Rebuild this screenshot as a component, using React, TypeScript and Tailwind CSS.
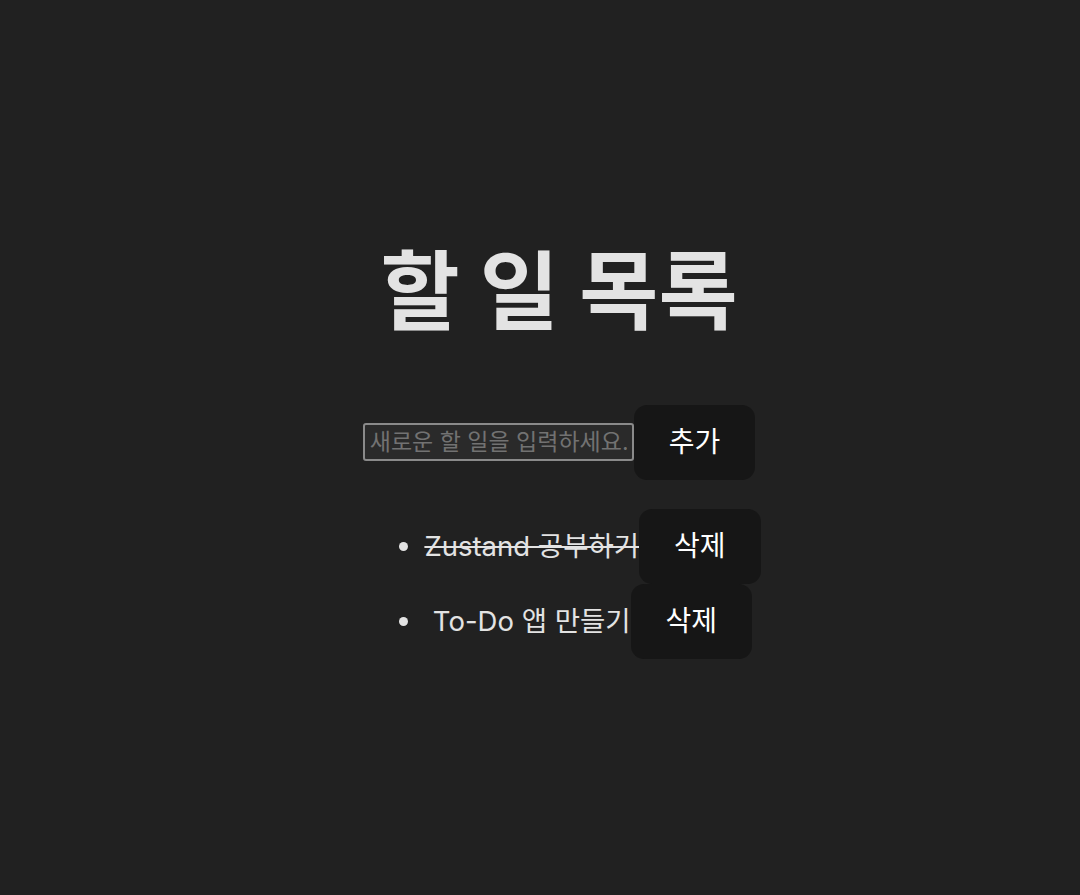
import { useState } from "react";

type Todo = { id: number; text: string; done: boolean };

const FONT = "font-['Inter','Noto_Sans_CJK_KR',sans-serif]";

export default function App() {
  const [todos, setTodos] = useState<Todo[]>([
    { id: 1, text: "Zustand 공부하기", done: true },
    { id: 2, text: "To-Do 앱 만들기", done: false },
  ]);
  const [input, setInput] = useState("");

  function addTodo() {
    if (!input.trim()) return;
    setTodos([...todos, { id: Date.now(), text: input, done: false }]);
    setInput("");
  }

  function toggle(id: number) {
    setTodos(todos.map((t) => (t.id === id ? { ...t, done: !t.done } : t)));
  }

  function remove(id: number) {
    setTodos(todos.filter((t) => t.id !== id));
  }

  return (
    <div
      className={`min-h-[895px] w-full bg-[#212121] flex items-center justify-center pl-[38px] pt-[8px] text-[#e3e3e3] ${FONT}`}
    >
      <div className="flex flex-col items-center text-center">
        <h1 className="text-[86px] leading-[95px] font-bold mb-[65px]">할 일 목록</h1>

        <div className="flex items-center">
          <input
            value={input}
            onChange={(e) => setInput(e.target.value)}
            placeholder="새로운 할 일을 입력하세요."
            className="w-[271px] h-[38px] px-[5px] bg-[#2a2a2a] border-2 border-[#8a8a8a] rounded-[3px] text-[23px] text-[#e3e3e3] placeholder:text-[#727272] outline-none"
          />
          <button
            onClick={addTodo}
            className="h-[75px] px-[35px] rounded-[13px] bg-[#161616] text-[28px] text-white"
          >
            추가
          </button>
        </div>

        <ul className="mt-[29px] pl-[67px] list-disc marker:text-[#e3e3e3]">
          {todos.map((t) => (
            <li key={t.id} className="h-[75px] text-[27.5px] leading-[75px]">
              <div className="inline-flex items-center">
                <span
                  onClick={() => toggle(t.id)}
                  className={t.done ? "line-through" : ""}
                >
                  {t.text}
                </span>
                <button
                  onClick={() => remove(t.id)}
                  className="h-[75px] px-[35px] rounded-[13px] bg-[#161616] text-[28px] leading-none text-white"
                >
                  삭제
                </button>
              </div>
            </li>
          ))}
        </ul>
      </div>
    </div>
  );
}
